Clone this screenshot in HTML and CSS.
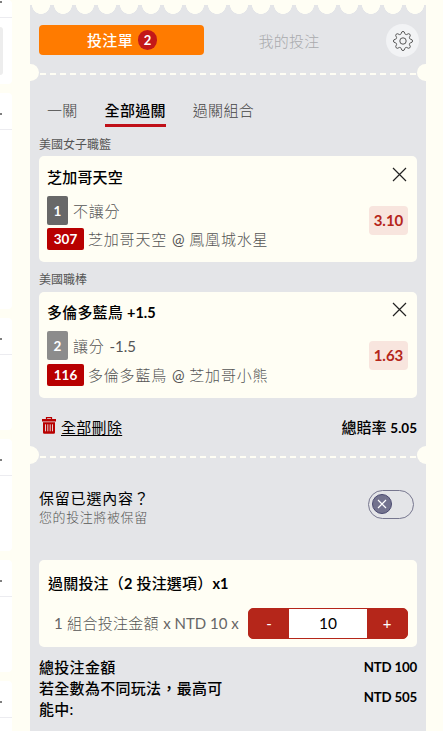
FILE: index.html
```html
<!DOCTYPE html>
<html lang="zh-Hant">
<head>
<meta charset="utf-8">
<title>投注單</title>
<link rel="stylesheet" href="styles.css">
</head>
<body>
<div class="page">
  <aside class="side">
    <div class="side-card first"><div class="side-head"><i></i></div><b class="side-box"></b></div>
    <div class="side-card tall"><div class="side-head"><i></i></div></div>
    <div class="side-card"><div class="side-head"><i></i></div></div>
    <div class="side-card"><div class="side-head"><i></i></div></div>
    <div class="side-card"><div class="side-head"><i></i></div></div>
    <div class="side-card"><div class="side-head"><i></i></div></div>
  </aside>
  <main class="slip">
    <div class="scallop"></div>
    <div class="tabs">
      <div class="tab active"><span>投注單</span><span class="count">2</span></div>
      <div class="tab"><span>我的投注</span></div>
      <div class="gear">
        <svg width="22" height="22" viewBox="0 0 22 22" fill="none" stroke="#555" stroke-width="1" stroke-linejoin="round">
          <path d="M9.2 3.5Q9.5 1.4 11 1.4T12.8 3.5Q13 4.3 13.8 4.5Q14.4 4.8 15.1 4.3Q16.800 3.1 17.800 4.2T17.700 6.900Q17.200 7.600 17.500 8.200Q17.700 9 18.500 9.200Q20.600 9.500 20.600 11T18.500 12.800Q17.700 13 17.500 13.800Q17.200 14.400 17.700 15.100Q18.900 16.800 17.800 17.800T15.100 17.700Q14.400 17.200 13.800 17.500Q13 17.700 12.800 18.500Q12.500 20.600 11 20.600T9.200 18.500Q9 17.700 8.200 17.500Q7.600 17.200 6.900 17.700Q5.200 18.900 4.200 17.800T4.300 15.100Q4.800 14.400 4.500 13.800Q4.300 13 3.500 12.800Q1.400 12.500 1.400 11T3.500 9.200Q4.300 9 4.500 8.200Q4.800 7.600 4.300 6.900Q3.100 5.200 4.200 4.200T6.900 4.300Q7.600 4.800 8.200 4.500Q9 4.300 9.200 3.500Z"/>
          <circle cx="11" cy="11" r="3.2"/>
        </svg>
      </div>
    </div>
    <div class="tear"></div>
    <nav class="modes"><span>一關</span><span class="on">全部過關</span><span>過關組合</span></nav>

    <div class="league">美國女子職籃</div>
    <section class="card pick">
      <div class="pick-main">
        <div class="title">芝加哥天空</div>
        <div class="line market"><b class="tag num">1</b><span>不讓分</span></div>
        <div class="line match"><b class="tag red">307</b><span>芝加哥天空 <span class="latin">@</span> 鳳凰城水星</span></div>
      </div>
      <div class="pick-side">
        <svg class="close" width="15" height="15" viewBox="0 0 15 15"><path d="M1 1L14 14M14 1L1 14" stroke="#222" stroke-width="1.2"/></svg>
        <div class="odds">3.10</div>
      </div>
    </section>
    <div class="league second">美國職棒</div>
    <section class="card pick tight">
      <div class="pick-main">
        <div class="title">多倫多藍鳥 <b>+1.5</b></div>
        <div class="line market"><b class="tag num light">2</b><span>讓分 <span class="latin">-1.5</span></span></div>
        <div class="line match"><b class="tag red">116</b><span>多倫多藍鳥 <span class="latin">@</span> 芝加哥小熊</span></div>
      </div>
      <div class="pick-side">
        <svg class="close" width="15" height="15" viewBox="0 0 15 15"><path d="M1 1L14 14M14 1L1 14" stroke="#222" stroke-width="1.2"/></svg>
        <div class="odds">1.63</div>
      </div>
    </section>
    <div class="summary">
      <svg width="14" height="17" viewBox="0 0 14 17"><path d="M4.500 2V.7h5V2" fill="none" stroke="#b80000" stroke-width="1.2"/><path d="M0 2h14v2.400H0zM1 5.300h12v10.200q0 1.200-1.200 1.200H2.200Q1 16.700 1 15.500z" fill="#b80000"/><path d="M3.500 7.300v7M5.800 7.300v7M8.200 7.300v7M10.500 7.300v7" stroke="#e5e6e8" stroke-width=".9"/></svg>
      <span class="clear">全部刪除</span>
      <span class="total"><span>總賠率</span> <em>5.05</em></span>
    </div>
    <div class="tear lower"></div>
    <div class="keep">
      <div><div class="keep-title">保留已選內容？</div><div class="keep-note">您的投注將被保留</div></div>
      <div class="toggle"><span><svg width="10" height="10" viewBox="0 0 10 10"><path d="M1 1L9 9M9 1L1 9" stroke="#fff" stroke-width="1.2"/></svg></span></div>
    </div>
    <section class="card stake">
      <div class="title">過關投注（<b>2</b> 投注選項）<b>x1</b></div>
      <div class="stake-row">
        <span class="formula"><span class="latin">1</span> 組合投注金額 <span class="latin">x NTD 10 x</span></span>
        <div class="stepper"><span>-</span><div class="amount">10</div><span>+</span></div>
      </div>
    </section>
    <div class="sum"><span>總投注金額</span><em>NTD 100</em></div>
    <div class="sum payout"><span class="wrap">若全數為不同玩法，最高可能中:</span><em>NTD 505</em></div>
  </main>
</div>
</body>
</html>
```
FILE: styles.css
```css
* { box-sizing: border-box; }
body {
  margin: 0;
  background: #fffef4;
  color: #000;
  font: 15px/20px Lato, "Noto Sans CJK TC", sans-serif;
  white-space: nowrap;
}
em { font-style: normal; }
.page { display: flex; height: 731px; overflow: hidden; }

.side { width: 12px; margin-right: 18px; display: flex; flex-direction: column; gap: 9px; overflow: hidden; }
.side-card { flex: none; height: 112px; background: #fff; border-radius: 0 4px 4px 0; }
.side-card.first { height: 84px; }
.side-card.first .side-head { height: 18px; padding-top: 6px; align-items: flex-start; }
.side-card.first .side-head i { margin-top: -5px; }
.side-card.tall { height: 216px; }
.side-head { height: 37px; padding-top: 6px; display: flex; align-items: center; border-bottom: 1px solid #ececf0; }
.side-head i { width: 2px; height: 2px; border-radius: 1px; background: #555; }
.side-box { display: block; width: 3px; height: 48px; margin-top: 9px; background: #ededed; border-radius: 0 4px 4px 0; }

.slip { width: 396px; height: 726px; margin-top: 5px; padding: 0 9px; background: #e4e5e8; }
.scallop {
  height: 9px;
  margin: 0 -9px;
  background: radial-gradient(circle at 11px 0, #fffef4 8.6px, transparent 9.2px) 0 0 / 22px 9px repeat-x;
}
.tabs { display: flex; align-items: center; height: 33px; margin: 10px -2px 0 0; }
.tab { flex: none; width: 170px; height: 30px; display: flex; align-items: center; justify-content: center; color: #a9aaad; letter-spacing: .3px; font-weight: 300; }
.tab.active { width: 165px; height: 30px; margin-top: -2px; gap: 5px; padding-left: 1px; color: #fff; background: #ff7b00; border-radius: 4px; font-weight: 500; }
.count { width: 19px; height: 20px; border-radius: 10px; background: #c31818; font-weight: 700; font-size: 13px; text-align: center; letter-spacing: 0; }
.gear { flex: none; width: 33px; height: 33px; margin-left: 12px; border-radius: 50%; background: #f2f3f5; display: flex; align-items: center; justify-content: center; }

.tear { position: relative; height: 2px; margin: 16px 0 0 1px; width: 376px; background: repeating-linear-gradient(90deg, #fffef4 0 6px, transparent 6px 10px); }
.tear::before, .tear::after { content: ""; position: absolute; top: -9px; width: 9px; height: 17px; background: #fffef4; }
.tear::before { left: -10px; border-radius: 0 9px 9px 0; }
.tear::after { right: -10px; border-radius: 9px 0 0 9px; }

.modes { display: flex; gap: 27px; height: 27px; margin: 25px 0 0 8px; color: #444; font-weight: 300; letter-spacing: .3px; }
.modes .on { color: #000; font-weight: 500; border-bottom: 3px solid #c01018; }
.league { margin: 9px 0 3px; height: 17px; font-size: 12px; line-height: 17px; color: #555; font-weight: 400; }
.league.second { margin-top: 9px; margin-bottom: 4px; }

.card { border-radius: 5px; background: #fffef4; }
.title { font-weight: 500; height: 22px; line-height: 22px; letter-spacing: .2px; }
.title b { font-size: 14.500px; letter-spacing: 0; }
.latin { font-weight: 400; letter-spacing: 0; }
.pick { display: flex; justify-content: space-between; height: 106px; padding: 10px 9px 0; }
.pick.tight { padding-top: 9px; }
.pick .title { margin-left: -1px; }
.line { display: flex; align-items: center; color: #555; font-weight: 300; letter-spacing: .8px; margin-left: -1px; }
.market { height: 29px; margin-top: 8px; gap: 5px; }
.match { height: 22px; margin-top: 3px; gap: 4px; }
.tight .match { margin-top: 4px; }
.tag { display: flex; align-items: center; justify-content: center; color: #fff; font-size: 13.500px; font-weight: 700; letter-spacing: 0; border-radius: 2px; }
.num { width: 21px; height: 29px; background: #686868; }
.num.light { background: #8c8c8c; }
.red { width: 37px; height: 22px; background: #b80000; }
.pick-side { display: flex; flex-direction: column; align-items: flex-end; }
.close { display: block; margin: 1px 1px 24px 0; }
.odds { width: 39px; height: 29px; border-radius: 4px; background: #f8e5de; color: #b5261a; font-weight: 700; line-height: 29px; text-align: center; font-size: 15px; }

.summary { display: flex; align-items: center; height: 22px; margin-top: 18px; padding-left: 3px; }
.summary svg { margin-top: -3px; }
.clear { margin-left: 5px; font-weight: 400; letter-spacing: .3px; text-decoration: underline; text-underline-offset: 2px; }
.total { margin-left: auto; font-weight: 500; font-size: 15px; }
.total em { font-size: 13.500px; font-weight: 700; }
.tear.lower { margin-top: 18px; }
.tear.lower::before, .tear.lower::after { height: 18px; top: -10px; }

.keep { display: flex; justify-content: space-between; height: 40px; margin-top: 30px; }
.keep-title { height: 20px; line-height: 20px; letter-spacing: .8px; }
.keep-note { height: 18px; line-height: 18px; font-size: 13px; color: #555; letter-spacing: .6px; font-weight: 300; }
.toggle { width: 46px; height: 29px; margin: 2px 3px 0 0; padding: 3px; border: 1px solid #77778f; border-radius: 15px; }
.toggle span { display: flex; align-items: center; justify-content: center; width: 20px; height: 20px; border: 1px solid #4a4a70; border-radius: 50%; background: #73738e; }

.stake { height: 87px; margin-top: 32px; padding: 12px 9px 0; }
.stake-row { display: flex; justify-content: space-between; align-items: center; margin-top: 14px; height: 31px; }
.formula { padding-left: 6px; margin-top: -2px; color: #555; font-weight: 300; letter-spacing: .3px; }
.formula .latin { color: #666; }
.stepper { display: flex; width: 160px; height: 31px; border: 1px solid #b5261a; border-radius: 5px; background: #b5261a; color: #fff; line-height: 29px; text-align: center; }
.stepper > span { width: 40px; }
.amount { flex: 1; background: #fff; color: #000; font-size: 15.500px; }
.sum { display: flex; justify-content: space-between; align-items: center; line-height: 21px; font-weight: 500; letter-spacing: .3px; }
.stake + .sum { margin-top: 10px; }
.sum em { font-size: 13.300px; font-weight: 700; letter-spacing: -.2px; }
.payout em { margin-top: -3px; }
.wrap { width: 190px; white-space: normal; }
```
